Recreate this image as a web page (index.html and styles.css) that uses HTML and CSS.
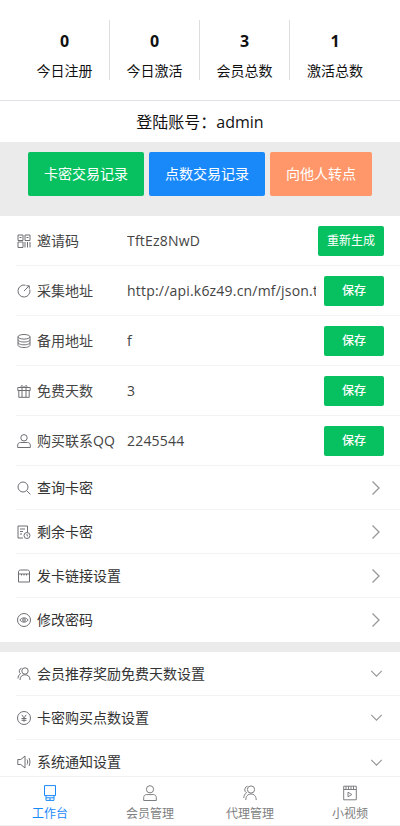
FILE: index.html
```html
<!DOCTYPE html>
<html lang="zh-CN">
<head>
<meta charset="utf-8">
<title>工作台</title>
<link rel="stylesheet" href="styles.css">
</head>
<body>
<div class="page">
  <section class="stats">
    <div class="stat"><b>0</b><span>今日注册</span></div>
    <div class="stat"><b>0</b><span>今日激活</span></div>
    <div class="stat"><b>3</b><span>会员总数</span></div>
    <div class="stat"><b>1</b><span>激活总数</span></div>
  </section>
  <div class="account">登陆账号：admin</div>
  <section class="actions">
    <a class="action green">卡密交易记录</a>
    <a class="action blue">点数交易记录</a>
    <a class="action orange">向他人转点</a>
  </section>
  <section class="list">
    <div class="row field">
      <svg class="ico" viewBox="0 0 14 14"><path d="M1 1h5v5.500H1zM8 1h5v5.500H8zM1 8h5v5.500H1zM8 8v5.500M10.500 8v5.500M13 8v5.500M2.500 3.500h2M9.500 3.500h2"/></svg>
      <span class="label">邀请码</span><span class="value">TftEz8NwD</span><a class="btn">重新生成</a>
    </div>
    <div class="row field">
      <svg class="ico" viewBox="0 0 14 14"><path d="M12.800 5.500A6 6 0 1 1 8.500 1.200M7 7l5-5M9.300 1.800h3v3"/></svg>
      <span class="label">采集地址</span><span class="value">http://api.k6z49.cn/mf/json.txt</span><a class="btn short">保存</a>
    </div>
    <div class="row field">
      <svg class="ico" viewBox="0 0 14 14"><ellipse cx="7" cy="2.800" rx="6" ry="2.300"/><path d="M1 2.800v8.400C1 12.500 3.700 13.500 7 13.500s6-1 6-2.300V2.800M1 5.700c0 1.300 2.700 2.300 6 2.300s6-1 6-2.300M1 8.500c0 1.300 2.700 2.300 6 2.300s6-1 6-2.300"/></svg>
      <span class="label">备用地址</span><span class="value">f</span><a class="btn short">保存</a>
    </div>
    <div class="row field">
      <svg class="ico" viewBox="0 0 14 14"><path d="M.8 3.500h12.400v3H.8zM1.800 6.500v6.800h10.400V6.500M5 3.500v9.800M9 3.500v9.800M4.500 3.500C3.300 1.500 5 .5 7 3.500c2-3 3.700-2 2.500 0"/></svg>
      <span class="label">免费天数</span><span class="value">3</span><a class="btn short">保存</a>
    </div>
    <div class="row field">
      <svg class="ico" viewBox="0 0 14 14"><circle cx="7" cy="3.800" r="3.200"/><path d="M3.500 8.500h7c1.700 0 2.800 1.200 2.800 2.600v2.400H.7v-2.400c0-1.400 1.100-2.600 2.800-2.600z"/></svg>
      <span class="label">购买联系QQ</span><span class="value">2245544</span><a class="btn short">保存</a>
    </div>
    <div class="row link">
      <svg class="ico" viewBox="0 0 14 14"><circle cx="6" cy="6" r="5"/><path d="M9.600 9.600l3.800 3.800"/></svg>
      <span class="title">查询卡密</span><svg class="chev" viewBox="0 0 10 16"><path d="M1.500 1.500L8 8l-6.500 6.500"/></svg>
    </div>
    <div class="row link">
      <svg class="ico" viewBox="0 0 14 14"><path d="M6 13H1V1h9.500v6M3 4h5M3 6.500h3M3 9h2"/><circle cx="10" cy="10.500" r="3"/><path d="M10 9v1.500l1 .8"/></svg>
      <span class="title">剩余卡密</span><svg class="chev" viewBox="0 0 10 16"><path d="M1.500 1.500L8 8l-6.500 6.500"/></svg>
    </div>
    <div class="row link">
      <svg class="ico" viewBox="0 0 14 14"><path d="M1.500 3C1.500 1.800 2.300 1 3.500 1h7c1.200 0 2 .8 2 2v10h-11zM1.500 5h11M4.500 5v1.500M7 5v1.500M9.500 5v1.500"/></svg>
      <span class="title">发卡链接设置</span><svg class="chev" viewBox="0 0 10 16"><path d="M1.500 1.500L8 8l-6.500 6.500"/></svg>
    </div>
    <div class="row link">
      <svg class="ico" viewBox="0 0 14 14"><circle cx="7" cy="7" r="6.500"/><path d="M2.800 7C5 4.200 9 4.200 11.200 7 9 9.800 5 9.800 2.800 7z"/><circle cx="7" cy="7" r="1.300"/></svg>
      <span class="title">修改密码</span><svg class="chev" viewBox="0 0 10 16"><path d="M1.500 1.500L8 8l-6.500 6.500"/></svg>
    </div>
  </section>
  <section class="list second">
    <div class="row link">
      <svg class="ico" viewBox="0 0 14 14"><circle cx="8" cy="4" r="3.200"/><path d="M3 13c0-3.500 2-5.200 5-5.200s5 1.700 5 5.200M4.500 1.200A3.200 3.200 0 0 0 3.500 6.800C1.800 7.800 1 9.500 1 11.500"/></svg>
      <span class="title">会员推荐奖励免费天数设置</span><svg class="chev down" viewBox="0 0 14 8"><path d="M1 1l6 6 6-6"/></svg>
    </div>
    <div class="row link">
      <svg class="ico" viewBox="0 0 14 14"><circle cx="7" cy="7" r="6.500"/><path d="M4.800 3.800L7 6.800l2.200-3M4.500 7.500h5M4.500 9.300h5M7 6.800v4"/></svg>
      <span class="title">卡密购买点数设置</span><svg class="chev down" viewBox="0 0 14 8"><path d="M1 1l6 6 6-6"/></svg>
    </div>
    <div class="row link">
      <svg class="ico" viewBox="0 0 14 14"><path d="M.8 4.500h3L8 1v12L3.800 9.500h-3zM10 4.500c.9 1.500.9 3.500 0 5M12 3c1.300 2.500 1.300 5.500 0 8"/></svg>
      <span class="title">系统通知设置</span><svg class="chev down" viewBox="0 0 14 8"><path d="M1 1l6 6 6-6"/></svg>
    </div>
  </section>
</div>
<nav class="tabbar">
  <a class="tab active">
    <svg viewBox="0 0 14 16"><path d="M1.500.6h11v10h-11zM3 10.600v4.800h8v-4.800M3 12.800h8M6 14.100h2"/></svg>
    <span>工作台</span>
  </a>
  <a class="tab">
    <svg viewBox="0 0 14 16"><circle cx="7" cy="4.300" r="3.600"/><path d="M3.500 9.600h7c1.700 0 2.800 1.300 2.800 2.900v3H.7v-3c0-1.600 1.100-2.900 2.800-2.900z"/></svg>
    <span>会员管理</span>
  </a>
  <a class="tab">
    <svg viewBox="0 0 14 16"><circle cx="8" cy="4.500" r="3.600"/><path d="M2.800 15c0-4 2.200-6 5.200-6s5.200 2 5.200 6M4.500 1.200A3.600 3.600 0 0 0 3.500 7.800C1.600 9 .8 11 .8 13"/></svg>
    <span>代理管理</span>
  </a>
  <a class="tab">
    <svg viewBox="0 0 14 16"><path d="M.7 1.200h12.600v13.600H.7zM.7 4.500h12.600M3 1.200v3.300M5.500 1.200v3.300M8 1.200v3.300M10.500 1.200v3.300M5 7.200v4.600l3.800-2.300z"/></svg>
    <span>小视频</span>
  </a>
</nav>
</body>
</html>
```
FILE: styles.css
```css
* { box-sizing: border-box; }
html, body { margin: 0; padding: 0; }
body {
  width: 400px;
  height: 826px;
  overflow: hidden;
  position: relative;
  background: #fff;
  color: #333;
  font-family: "Open Sans", "Noto Sans CJK SC", sans-serif;
  font-size: 14px;
}
a { display: block; }
.stats {
  display: flex;
  padding: 20px 20px 20px;
  height: 101px;
  border-bottom: 1px solid #e0e0e5;
}
.stat {
  width: 90px;
  height: 60px;
  border-right: 1px solid #ddd;
  display: flex;
  flex-direction: column;
  align-items: center;
  color: #111;
}
.stat:last-child { border-right: 0; }
.stat b { font-size: 16px; line-height: 20px; height: 20px; margin-top: 11px; font-weight: 700; }
.stat span { font-size: 14px; line-height: 20px; margin-top: 10px; }
.account {
  height: 41px;
  line-height: 42px;
  text-align: center;
  font-size: 16px;
  color: #111;
}
.actions {
  height: 74px;
  background: #ebebeb;
  padding: 10px 28px 0;
  display: flex;
  gap: 5px;
}
.action {
  width: 116px;
  height: 44px;
  line-height: 44px;
  text-align: center;
  color: #fff;
  font-size: 14px;
  border-radius: 2px;
}
.action.orange { width: 102px; background: #ff976a; }
.green { background: #07c160; }
.blue { background: #1989fa; }
.list { background: #fff; }
.second { border-top: 10px solid #ebebeb; }
.row {
  display: flex;
  align-items: center;
  margin-left: 16px;
  border-bottom: 1px solid #f3f3f3;
}
.row:last-child { border-bottom: 0; }
.field { height: 50px; padding-right: 16px; }
.link { height: 44px; padding-right: 16px; }
.list:first-of-type .row:last-child { height: 45px; }
.ico {
  width: 14px;
  height: 14px;
  margin-left: 1px;
  flex: none;
  fill: none;
  stroke: #6d6f73;
  stroke-width: 1;
}
.label { margin-left: 6px; width: 90px; flex: none; white-space: nowrap; color: #444; line-height: 20px; }
.value { flex: 1; min-width: 0; overflow: hidden; white-space: nowrap; color: #444; letter-spacing: .2px; line-height: 20px; }
.title { margin-left: 6px; flex: 1; color: #333; line-height: 20px; }
.btn {
  flex: none;
  width: 66px;
  height: 30px;
  line-height: 30px;
  margin-left: 2px;
  text-align: center;
  color: #fff;
  background: #07c160;
  border-radius: 2px;
  font-size: 12px;
}
.btn.short { width: 60px; margin-left: 8px; font-weight: 500; }
.chev {
  width: 10px;
  height: 16px;
  flex: none;
  margin-right: 3px;
  fill: none;
  stroke: #969799;
  stroke-width: 1.300;
}
.chev.down { width: 13px; height: 7px; margin-right: 1px; }
.tabbar {
  position: absolute;
  left: 0;
  right: 0;
  bottom: 0;
  height: 50px;
  display: flex;
  background: #fff;
  border-top: 1px solid #f1f1f1;
  border-bottom: 1px solid #f1f1f1;
}
.tab {
  flex: 1;
  display: flex;
  flex-direction: column;
  align-items: center;
  color: #7d7e80;
  font-size: 12px;
}
.tab svg {
  width: 14px;
  height: 16px;
  margin-top: 8px;
  fill: none;
  stroke: #7d7e80;
  stroke-width: 1;
}
.tab span { line-height: 16px; margin-top: 5px; }
.tab.active { color: #1989fa; }
.tab.active svg { stroke: #1989fa; }
```
